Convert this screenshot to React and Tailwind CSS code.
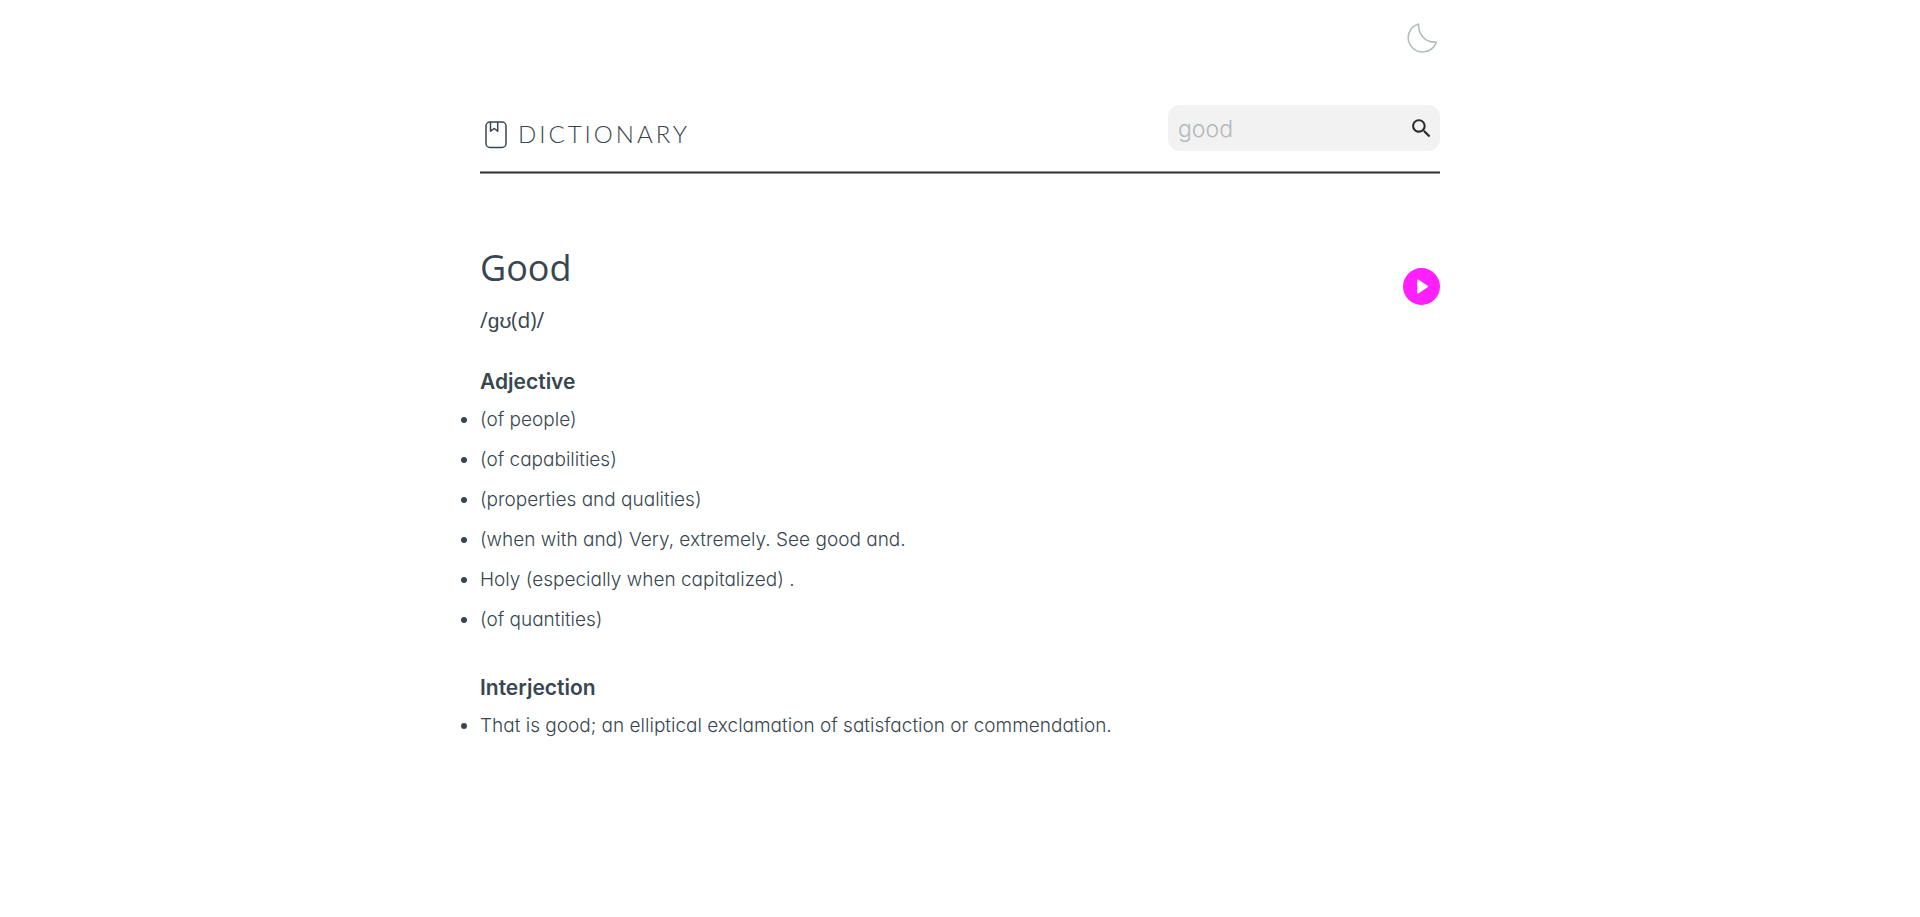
import { useState } from "react";

const meanings = [
  {
    partOfSpeech: "Adjective",
    definitions: [
      "(of people)",
      "(of capabilities)",
      "(properties and qualities)",
      "(when with and) Very, extremely. See good and.",
      "Holy (especially when capitalized) .",
      "(of quantities)",
    ],
  },
  {
    partOfSpeech: "Interjection",
    definitions: [
      "That is good; an elliptical exclamation of satisfaction or commendation.",
    ],
  },
];

function MoonIcon() {
  return (
    <svg viewBox="0 0 36 36" className="size-9" fill="none" stroke="#b2bfbc" strokeWidth="1.6" strokeLinejoin="round" aria-hidden="true">
      <path d="M14.6 4C8.400 5.600 4.200 11 4.200 17.600C4.200 25.600 10.600 32 18.600 32C25 32 30.400 28 32.400 22C22.500 23.200 13.800 15 14.600 4Z" />
    </svg>
  );
}

function BookIcon() {
  return (
    <svg viewBox="0 0 32 32" className="size-8" fill="none" stroke="#374650" strokeWidth="1.500" strokeLinejoin="round" aria-hidden="true">
      <rect x="6" y="4" width="20" height="25.500" rx="4" />
      <path d="M10.500 4V13.200L14.200 10.500L17.700 13.200V4" />
    </svg>
  );
}

function SearchIcon() {
  return (
    <svg viewBox="0 0 24 24" className="size-[25px]" fill="#2d2d2d" aria-hidden="true">
      <path d="M15.500 14h-.79l-.28-.27C15.410 12.590 16 11.110 16 9.500 16 5.910 13.090 3 9.500 3S3 5.910 3 9.500 5.910 16 9.500 16c1.610 0 3.090-.59 4.230-1.570l.27.28v.79l5 4.990L20.490 19l-4.990-5zm-6 0C7.010 14 5 11.990 5 9.500S7.010 5 9.500 5 14 7.010 14 9.500 11.990 14 9.500 14z" />
    </svg>
  );
}

function PlayIcon() {
  return (
    <svg viewBox="0 0 37 37" className="size-[37px]" aria-hidden="true">
      <circle cx="18.500" cy="18.500" r="18.500" fill="#ff1fff" />
      <path d="M15.200 12.500L24 18.500L15.200 24.500Z" fill="#fff" stroke="#fff" strokeWidth="2" strokeLinejoin="round" />
    </svg>
  );
}

export default function App() {
  const [word, setWord] = useState("");

  return (
    <div className="min-h-screen bg-white px-8 font-['Inter',sans-serif] text-[#374650] [font-feature-settings:'cv11'] lg:px-0">
      <div className="mx-auto w-full pt-5 pb-16 lg:w-1/2">
        <div className="flex justify-end">
          <button type="button" aria-label="Toggle dark mode">
            <MoonIcon />
          </button>
        </div>

        <header className="mt-[49px] flex items-center justify-between gap-4 border-b border-[#8f9190] pb-5 shadow-[0_1px_#333333,0_2px_#8f9190]">
          <h1 className="flex items-center gap-1.5 pt-3 font-['Lato',sans-serif] text-2xl leading-8 font-light tracking-[3px]">
            <BookIcon />
            DICTIONARY
          </h1>
          <form className="flex h-[46px] w-68 items-center rounded-xl bg-[#f2f2f2] pr-1.5 pl-2.5" onSubmit={(e) => e.preventDefault()}>
            <input
              type="text"
              aria-label="Search for a word"
              placeholder="good"
              value={word}
              onChange={(e) => setWord(e.target.value)}
              className="min-w-0 flex-1 bg-transparent pt-0.5 text-[23px] leading-8 font-light outline-none placeholder:text-[#b3b9bc]"
            />
            <button type="submit" aria-label="Search">
              <SearchIcon />
            </button>
          </form>
        </header>

        <main>
          <section className="mt-18 flex items-start justify-between">
            <div>
              <h2 className="font-['Open_Sans',sans-serif] text-4xl leading-12">Good</h2>
              <p className="mt-3.5 font-['Open_Sans',sans-serif] text-[21px] leading-7">/ɡʊ(d)/</p>
            </div>
            <button type="button" aria-label="Play pronunciation" className="mt-6">
              <PlayIcon />
            </button>
          </section>

          {meanings.map(({ partOfSpeech, definitions }) => (
            <section key={partOfSpeech} className="mt-[34px]">
              <h3 className="text-[21px] leading-7 font-semibold">{partOfSpeech}</h3>
              <ul className="mt-1 list-disc text-[19px] leading-10 font-light">
                {definitions.map((definition) => (
                  <li key={definition}>{definition}</li>
                ))}
              </ul>
            </section>
          ))}
        </main>
      </div>
    </div>
  );
}
